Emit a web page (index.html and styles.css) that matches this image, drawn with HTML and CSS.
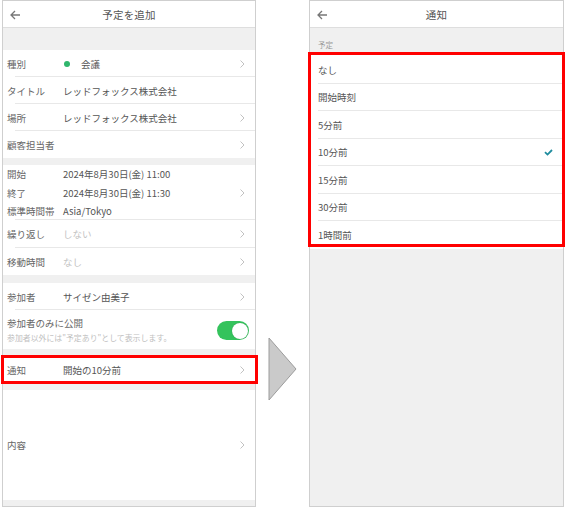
FILE: index.html
```html
<!DOCTYPE html>
<html lang="ja">
<head>
<meta charset="utf-8">
<link rel="stylesheet" href="styles.css">
</head>
<body>
<div class="stage">
  <div class="phone left">
    <div class="header">
      <svg class="back" width="11" height="10" viewBox="0 0 11 10"><path d="M10 5H1.5M5 1L1 5l4 4" fill="none" stroke="#777" stroke-width="1.3"/></svg>
      <div class="title">予定を追加</div>
    </div>
    <div class="band b-top"></div>
    <div class="row"><span class="label">種別</span><span class="value"><i class="dot"></i>会議</span><svg class="chev" width="5" height="8" viewBox="0 0 5 8"><path d="M0.5 0.5L4 4L0.5 7.5" fill="none" stroke="#bbb" stroke-width="0.9"/></svg></div>
    <div class="row"><span class="label">タイトル</span><span class="value">レッドフォックス株式会社</span></div>
    <div class="row"><span class="label">場所</span><span class="value">レッドフォックス株式会社</span><svg class="chev" width="5" height="8" viewBox="0 0 5 8"><path d="M0.5 0.5L4 4L0.5 7.5" fill="none" stroke="#bbb" stroke-width="0.9"/></svg></div>
    <div class="row last"><span class="label">顧客担当者</span><span class="value"></span><svg class="chev" width="5" height="8" viewBox="0 0 5 8"><path d="M0.5 0.5L4 4L0.5 7.5" fill="none" stroke="#bbb" stroke-width="0.9"/></svg></div>
    <div class="band b7"></div>
    <div class="timeblock">
      <div class="trows">
        <div class="trow"><span class="label">開始</span><span class="value">2024年8月30日(金) 11:00</span></div>
        <div class="trow"><span class="label">終了</span><span class="value">2024年8月30日(金) 11:30</span></div>
        <div class="trow"><span class="label">標準時間帯</span><span class="value">Asia/Tokyo</span></div>
      </div>
      <svg class="chev" width="5" height="8" viewBox="0 0 5 8"><path d="M0.5 0.5L4 4L0.5 7.5" fill="none" stroke="#bbb" stroke-width="0.9"/></svg>
    </div>
    <div class="row tall"><span class="label">繰り返し</span><span class="value ph">しない</span><svg class="chev" width="5" height="8" viewBox="0 0 5 8"><path d="M0.5 0.5L4 4L0.5 7.5" fill="none" stroke="#bbb" stroke-width="0.9"/></svg></div>
    <div class="row last"><span class="label">移動時間</span><span class="value ph">なし</span><svg class="chev" width="5" height="8" viewBox="0 0 5 8"><path d="M0.5 0.5L4 4L0.5 7.5" fill="none" stroke="#bbb" stroke-width="0.9"/></svg></div>
    <div class="band b8"></div>
    <div class="row"><span class="label">参加者</span><span class="value">サイゼン由美子</span><svg class="chev" width="5" height="8" viewBox="0 0 5 8"><path d="M0.5 0.5L4 4L0.5 7.5" fill="none" stroke="#bbb" stroke-width="0.9"/></svg></div>
    <div class="row public">
      <div class="ptext">
        <div class="ptitle">参加者のみに公開</div>
        <div class="psub">参加者以外には"予定あり"として表示します。</div>
      </div>
      <span class="toggle"><i class="knob"></i></span>
    </div>
    <div class="band b7"></div>
    <div class="row last"><span class="label">通知</span><span class="value">開始の10分前</span><svg class="chev" width="5" height="8" viewBox="0 0 5 8"><path d="M0.5 0.5L4 4L0.5 7.5" fill="none" stroke="#bbb" stroke-width="0.9"/></svg></div>
    <div class="band b7"></div>
    <div class="row content last"><span class="label">内容</span><span class="value"></span><svg class="chev" width="5" height="8" viewBox="0 0 5 8"><path d="M0.5 0.5L4 4L0.5 7.5" fill="none" stroke="#bbb" stroke-width="0.9"/></svg></div>
    <div class="band rest"></div>
  </div>

  <div class="arrow">
    <svg width="29" height="64" viewBox="0 0 29 64"><polygon points="1,1 28,32 1,63" fill="#cacaca" stroke="#9c9c9c" stroke-width="1"/></svg>
  </div>

  <div class="phone right">
    <div class="header">
      <svg class="back" width="11" height="10" viewBox="0 0 11 10"><path d="M10 5H1.5M5 1L1 5l4 4" fill="none" stroke="#777" stroke-width="1.3"/></svg>
      <div class="title">通知</div>
    </div>
    <div class="band sec"><span class="seclabel">予定</span></div>
    <div class="list">
      <div class="opt">なし</div>
      <div class="opt">開始時刻</div>
      <div class="opt">5分前</div>
      <div class="opt sel">10分前<svg class="check" width="9" height="7" viewBox="0 0 9 7"><path d="M1 3.2L3.5 5.6L8 1" fill="none" stroke="#1f8c9e" stroke-width="1.8"/></svg></div>
      <div class="opt">15分前</div>
      <div class="opt">30分前</div>
      <div class="opt last">1時間前</div>
    </div>
    <div class="band rest"></div>
  </div>

  <div class="hl hl-left"></div>
  <div class="hl hl-right"></div>
</div>
</body>
</html>
```

FILE: styles.css
```css
* { box-sizing: border-box; }
html, body {
  margin: 0;
  padding: 0;
  background: #fff;
  width: 565px;
  height: 507px;
  overflow: hidden;
}
body {
  font-family: "Noto Sans CJK JP", "Noto Sans", sans-serif;
  color: #555;
}
.stage {
  position: relative;
  display: flex;
  align-items: flex-start;
  width: 565px;
  height: 507px;
  padding-left: 2px;
}
.phone {
  display: flex;
  flex-direction: column;
  height: 507px;
  border: 1px solid #cfcfcf;
  background: #fff;
}
.phone.left { width: 254px; }
.phone.right { width: 255px; }
.header {
  position: relative;
  height: 27px;
  flex: none;
  display: flex;
  align-items: center;
  justify-content: center;
  border-bottom: 1px solid #dedede;
}
.header .back {
  position: absolute;
  left: 7px;
  top: 9px;
}
.title {
  font-size: 10.5px;
  color: #555;
  letter-spacing: 0.2px;
}
.band {
  background: #f0f0f0;
  flex: none;
}
.b-top { height: 22px; }
.b7 { height: 7px; }
.b8 { height: 8px; }
.rest { flex: 1; }
.row {
  flex: none;
  display: flex;
  align-items: center;
  height: 27px;
  padding: 0 10px 0 4px;
  font-size: 9.5px;
  background: linear-gradient(#e8e8e8, #e8e8e8) no-repeat 12px 100% / calc(100% - 12px) 1px;
}
.row.tall { height: 28px; }
.row.last { background: none; }
.label {
  width: 56px;
  flex: none;
  color: #666;
}
.value {
  flex: 1;
  color: #555;
  display: flex;
  align-items: center;
}
.value.ph { color: #c2c2c2; }
.dot {
  width: 6px;
  height: 6px;
  border-radius: 50%;
  background: #2fb66c;
  margin: 0 11px 0 1px;
}
.chev { flex: none; }
.timeblock {
  flex: none;
  height: 55px;
  display: flex;
  align-items: center;
  padding: 0 10px 0 4px;
  font-size: 9.5px;
  background: linear-gradient(#e8e8e8, #e8e8e8) no-repeat 12px 100% / calc(100% - 12px) 1px;
}
.trows {
  flex: 1;
  display: flex;
  flex-direction: column;
}
.trow {
  display: flex;
  height: 18.5px;
  align-items: center;
}
.row.public {
  height: 39px;
  padding-right: 6px;
  background: none;
}
.ptext { flex: 1; }
.ptitle {
  font-size: 9.5px;
  color: #666;
  line-height: 13px;
}
.psub {
  font-size: 7.9px;
  color: #c0c0c0;
  line-height: 11px;
  margin-top: 2px;
}
.toggle {
  width: 32px;
  height: 19px;
  border-radius: 10px;
  background: #34c35c;
  display: flex;
  align-items: center;
  justify-content: flex-end;
  padding-right: 1.5px;
  flex: none;
  margin-top: 2px;
}
.knob {
  width: 16px;
  height: 16px;
  border-radius: 50%;
  background: #fff;
  box-shadow: 0 0 1px rgba(0,0,0,0.3);
}
.row.content { height: 110px; }

.arrow {
  width: 53px;
  height: 507px;
  display: flex;
  align-items: flex-start;
  padding: 337px 0 0 12px;
  flex: none;
}

.sec {
  height: 25px;
  display: flex;
  align-items: flex-end;
  padding: 0 0 3px 8px;
}
.seclabel {
  font-size: 7.5px;
  color: #999;
}
.list {
  flex: none;
  background: #fff;
  padding: 3px 0 0;
}
.opt {
  height: 27.5px;
  display: flex;
  align-items: center;
  justify-content: space-between;
  padding: 0 10px 0 8px;
  font-size: 9.5px;
  color: #555;
  background: linear-gradient(#e8e8e8, #e8e8e8) no-repeat 8px 100% / calc(100% - 8px) 1px;
}
.opt.last { background: none; }
.check { flex: none; margin-top: 1px; }

.hl {
  position: absolute;
  border: 3px solid #f00;
  pointer-events: none;
}
.hl-left {
  left: 1px;
  top: 355px;
  width: 257px;
  height: 29px;
}
.hl-right {
  left: 308px;
  top: 52px;
  width: 257px;
  height: 195px;
}
```
